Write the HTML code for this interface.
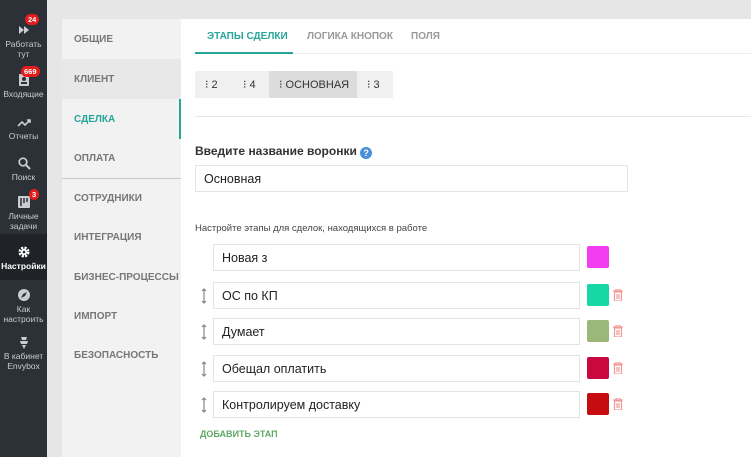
<!DOCTYPE html>
<html><head><meta charset="utf-8"><style>
*{box-sizing:border-box;margin:0;padding:0}
body{width:751px;height:457px;overflow:hidden;background:#e6e6e6;font-family:"Liberation Sans",sans-serif;position:relative}
.sb{position:absolute;left:0;top:0;width:47px;height:457px;background:#2c3138;color:#c9ccd0;font-size:8.5px;text-align:center;line-height:10px}
.it{position:absolute;left:0;width:47px}
.ic{display:block;margin:0 auto 2px;width:14px;height:14px}
.bd{position:absolute;background:#e41c1c;color:#fff;font-weight:bold;font-size:7.5px;border-radius:7px;padding:1px 3px;line-height:9px}
.act{background:#1f2328;color:#fff;font-weight:bold}
.menu{position:absolute;left:62px;top:19px;width:119px;height:438px;background:#f2f2f2}
.mi{position:absolute;left:0;width:119px;height:40px;line-height:42px;padding-left:12px;font-size:10px;font-weight:bold;color:#777}
.content{position:absolute;left:181px;top:19px;width:570px;height:438px;background:#fff}
.tab{position:absolute;top:12px;font-size:10px;font-weight:bold;color:#999}
.inp{position:absolute;border:1px solid #e4e4e4;background:#fff;font-size:12.5px;color:#222;padding-left:8px;line-height:27px;height:27px}
.sq{position:absolute;width:22px;height:22px;border-radius:2px}
.tr{position:absolute;left:432px;width:10px;height:12px}
.dr{position:absolute;left:20px;width:6px;height:16px}
</style></head><body>
<div class="sb">
 <div class="it" style="top:23px"><svg class="ic" viewBox="0 0 14 14"><path d="M2 3l5 4-5 4zM7 3l5 4-5 4z" fill="#c9ccd0"/></svg>Работать<br>тут</div>
 <div class="bd" style="left:25px;top:14px">24</div>
 <div class="it" style="top:73px"><svg class="ic" viewBox="0 0 14 14"><rect x="2" y="1" width="10" height="12" rx="1" fill="#c9ccd0"/><circle cx="7" cy="6" r="2" fill="#2c3138"/><rect x="4" y="9" width="6" height="2" fill="#2c3138"/></svg>Входящие</div>
 <div class="bd" style="left:21px;top:66px">669</div>
 <div class="it" style="top:115px"><svg class="ic" viewBox="0 0 14 14"><path d="M1 11l4-4 3 3 5-5M10 5h3v3" stroke="#c9ccd0" stroke-width="1.6" fill="none"/></svg>Отчеты</div>
 <div class="it" style="top:156px"><svg class="ic" viewBox="0 0 14 14"><circle cx="6" cy="6" r="3.8" stroke="#c9ccd0" stroke-width="1.7" fill="none"/><path d="M9 9l4 4" stroke="#c9ccd0" stroke-width="2"/></svg>Поиск</div>
 <div class="it" style="top:195px"><svg class="ic" viewBox="0 0 14 14"><rect x="1" y="1" width="12" height="12" rx="1" fill="#c9ccd0"/><path d="M4 3v8M7 3v5M10 3v4" stroke="#2c3138" stroke-width="1.5"/></svg>Личные<br>задачи</div>
 <div class="bd" style="left:29px;top:189px">3</div>
 <div class="it act" style="top:234px;height:46px;padding-top:27px">Настройки</div>
 <div class="it" style="top:245px"><svg class="ic" viewBox="0 0 14 14"><circle cx="7" cy="7" r="4" fill="none" stroke="#fff" stroke-width="3" stroke-dasharray="2 1.2"/><circle cx="7" cy="7" r="3" fill="#fff"/><circle cx="7" cy="7" r="1.3" fill="#1f2328"/></svg></div>
 <div class="it" style="top:288px"><svg class="ic" viewBox="0 0 14 14"><circle cx="7" cy="7" r="6" fill="#c9ccd0"/><path d="M10 4L6 6 4 10 8 8z" fill="#2c3138"/></svg>Как<br>настроить</div>
 <div class="it" style="top:335px"><svg class="ic" viewBox="0 0 14 14"><path d="M4 2h6l-1 3H5zM3 6h8l-1 3H4zM5 10h4l-2 4z" fill="#c9ccd0"/></svg>В кабинет<br>Envybox</div>
</div>
<div class="menu">
 <div class="mi" style="top:0">ОБЩИЕ</div>
 <div class="mi" style="top:40px;background:#e8e8e8">КЛИЕНТ</div>
 <div class="mi" style="top:80px;color:#26a69a;border-right:2px solid #26a69a">СДЕЛКА</div>
 <div class="mi" style="top:119px">ОПЛАТА</div>
 <div style="position:absolute;top:159px;left:0;width:119px;height:1px;background:#c8c8c8"></div>
 <div class="mi" style="top:159px">СОТРУДНИКИ</div>
 <div class="mi" style="top:198px">ИНТЕГРАЦИЯ</div>
 <div class="mi" style="top:238px">БИЗНЕС-ПРОЦЕССЫ</div>
 <div class="mi" style="top:277px">ИМПОРТ</div>
 <div class="mi" style="top:316px">БЕЗОПАСНОСТЬ</div>
</div>
<div class="content">
 <div class="tab" style="left:26px;color:#26a69a">ЭТАПЫ СДЕЛКИ</div>
 <div class="tab" style="left:126px">ЛОГИКА КНОПОК</div>
 <div class="tab" style="left:230px">ПОЛЯ</div>
 <div style="position:absolute;left:14px;top:34px;width:556px;height:1px;background:#ececec"></div>
 <div style="position:absolute;left:14px;top:33px;width:98px;height:2px;background:#26a69a"></div>
 <div style="position:absolute;left:14px;top:52px;width:198px;height:27px;background:#f0f0f0;font-size:11px;color:#333;line-height:29px">
  <span style="position:absolute;left:10px">⁝ 2</span><span style="position:absolute;left:48px">⁝ 4</span>
  <span style="position:absolute;left:74px;width:88px;height:27px;background:#dcdcdc;padding-left:10px">⁝ ОСНОВНАЯ</span>
  <span style="position:absolute;left:172px">⁝ 3</span></div>
 <div style="position:absolute;left:14px;top:97px;width:556px;height:1px;background:#e8e8e8"></div>
 <div style="position:absolute;left:14px;top:125px;font-size:12px;font-weight:bold;color:#333">Введите название воронки <span style="display:inline-block;width:12px;height:12px;border-radius:6px;background:#4a90d9;color:#fff;font-size:9px;text-align:center;line-height:12px;vertical-align:-1px">?</span></div>
 <div class="inp" style="left:14px;top:146px;width:433px">Основная</div>
 <div style="position:absolute;left:14px;top:204px;font-size:9.5px;color:#444">Настройте этапы для сделок, находящихся в работе</div>
 <div class="inp" style="left:32px;top:225px;width:367px">Новая з</div><div class="sq" style="left:406px;top:227px;background:#f23ef0"></div>
 <div class="inp" style="left:32px;top:263px;width:367px">ОС по КП</div><div class="sq" style="left:406px;top:265px;background:#17d8a5"></div>
 <div class="inp" style="left:32px;top:299px;width:367px">Думает</div><div class="sq" style="left:406px;top:301px;background:#9cb77a"></div>
 <div class="inp" style="left:32px;top:336px;width:367px">Обещал оплатить</div><div class="sq" style="left:406px;top:338px;background:#c9083e"></div>
 <div class="inp" style="left:32px;top:372px;width:367px">Контролируем доставку</div><div class="sq" style="left:406px;top:374px;background:#c50c10"></div>
 <svg class="dr" style="top:269px" viewBox="0 0 6 16"><path d="M3 1v14M1 3l2-2 2 2M1 13l2 2 2-2" stroke="#888" stroke-width="1.2" fill="none"/></svg>
 <svg class="dr" style="top:305px" viewBox="0 0 6 16"><path d="M3 1v14M1 3l2-2 2 2M1 13l2 2 2-2" stroke="#888" stroke-width="1.2" fill="none"/></svg>
 <svg class="dr" style="top:342px" viewBox="0 0 6 16"><path d="M3 1v14M1 3l2-2 2 2M1 13l2 2 2-2" stroke="#888" stroke-width="1.2" fill="none"/></svg>
 <svg class="dr" style="top:378px" viewBox="0 0 6 16"><path d="M3 1v14M1 3l2-2 2 2M1 13l2 2 2-2" stroke="#888" stroke-width="1.2" fill="none"/></svg>
 <svg class="tr" style="top:270px" viewBox="0 0 10 12"><path d="M0 2h10M3 2V0h4v2M1.5 3h7v9h-7zM4 5v5M6 5v5" stroke="#f29a9a" stroke-width="1.2" fill="none"/></svg>
 <svg class="tr" style="top:306px" viewBox="0 0 10 12"><path d="M0 2h10M3 2V0h4v2M1.5 3h7v9h-7zM4 5v5M6 5v5" stroke="#f29a9a" stroke-width="1.2" fill="none"/></svg>
 <svg class="tr" style="top:343px" viewBox="0 0 10 12"><path d="M0 2h10M3 2V0h4v2M1.5 3h7v9h-7zM4 5v5M6 5v5" stroke="#f29a9a" stroke-width="1.2" fill="none"/></svg>
 <svg class="tr" style="top:379px" viewBox="0 0 10 12"><path d="M0 2h10M3 2V0h4v2M1.5 3h7v9h-7zM4 5v5M6 5v5" stroke="#f29a9a" stroke-width="1.2" fill="none"/></svg>
 <div style="position:absolute;left:19px;top:410px;font-size:9px;font-weight:bold;color:#5fa863">ДОБАВИТЬ ЭТАП</div>
</div>
</body></html>
